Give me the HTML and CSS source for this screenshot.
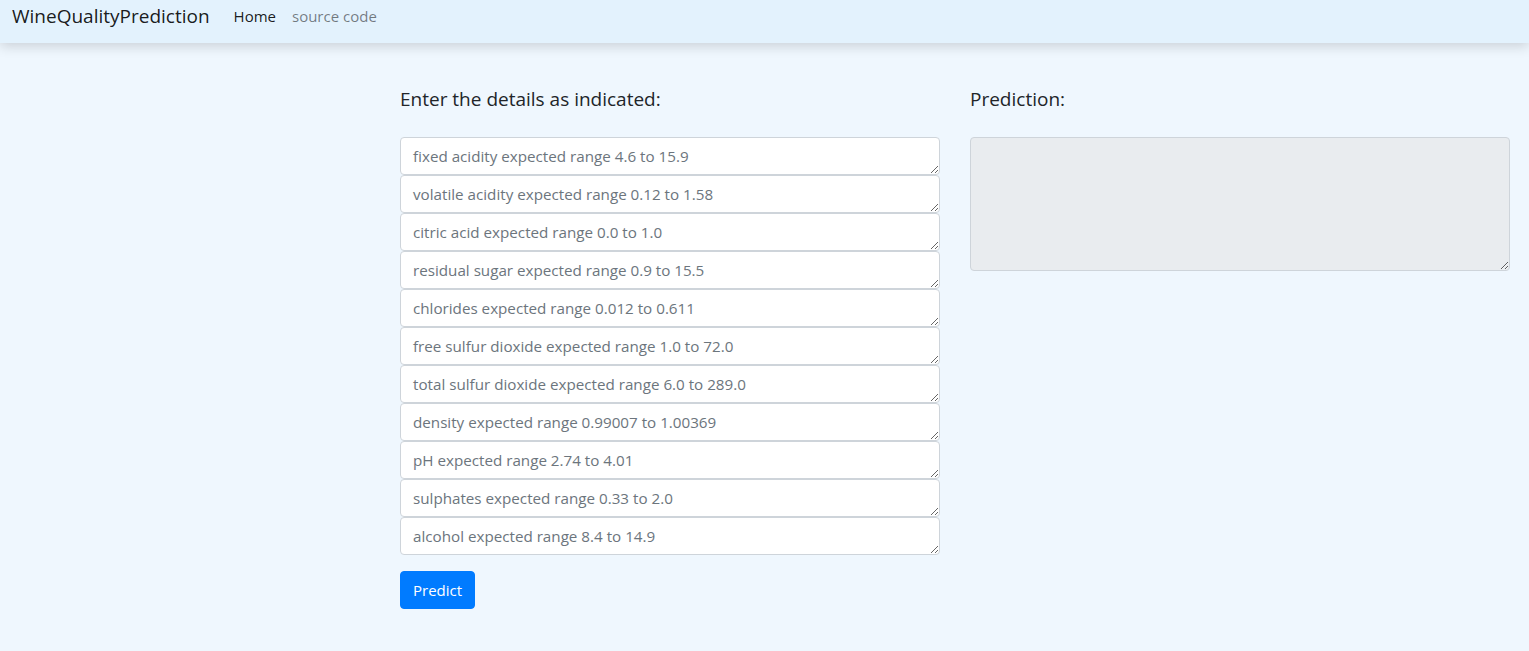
FILE: index.html
```html
<!DOCTYPE html>
<html lang="en">
<head>
<meta charset="utf-8">
<title>WineQualityPrediction</title>
<link rel="stylesheet" href="styles.css">
</head>
<body>
<nav class="navbar">
  <a class="brand" href="#">WineQualityPrediction</a>
  <ul class="nav">
    <li><a class="nav-link active" href="#">Home</a></li>
    <li><a class="nav-link" href="#">source code</a></li>
  </ul>
</nav>
<main class="main">
  <section class="col">
    <h5 class="title">Enter the details as indicated:</h5>
    <form class="form">
      <textarea class="field" rows="1" placeholder="fixed acidity expected range 4.6 to 15.9"></textarea>
      <textarea class="field" rows="1" placeholder="volatile acidity expected range 0.12 to 1.58"></textarea>
      <textarea class="field" rows="1" placeholder="citric acid expected range 0.0 to 1.0"></textarea>
      <textarea class="field" rows="1" placeholder="residual sugar expected range 0.9 to 15.5"></textarea>
      <textarea class="field" rows="1" placeholder="chlorides expected range 0.012 to 0.611"></textarea>
      <textarea class="field" rows="1" placeholder="free sulfur dioxide expected range 1.0 to 72.0"></textarea>
      <textarea class="field" rows="1" placeholder="total sulfur dioxide expected range 6.0 to 289.0"></textarea>
      <textarea class="field" rows="1" placeholder="density expected range 0.99007 to 1.00369"></textarea>
      <textarea class="field" rows="1" placeholder="pH expected range 2.74 to 4.01"></textarea>
      <textarea class="field" rows="1" placeholder="sulphates expected range 0.33 to 2.0"></textarea>
      <textarea class="field" rows="1" placeholder="alcohol expected range 8.4 to 14.9"></textarea>
      <button type="button" class="btn">Predict</button>
    </form>
  </section>
  <section class="col">
    <h5 class="title">Prediction:</h5>
    <textarea class="field result" readonly></textarea>
  </section>
</main>
</body>
</html>
```

FILE: styles.css
```css
* { box-sizing: border-box; }
html, body { margin: 0; height: 100%; }
body {
  background: #eff7fe;
  font-family: "Open Sans", "Noto Sans", sans-serif;
  font-size: 16px;
  line-height: 1.5;
  color: #212529;
}
.navbar {
  height: 43px;
  background: #e3f2fd;
  display: flex;
  align-items: flex-start;
  padding: 1px 12px 0;
  box-shadow: 0 3px 12px rgba(0, 0, 0, 0.16);
  position: relative;
}
.brand {
  font-size: 19px;
  line-height: 30px;
  color: rgba(0, 0, 0, 0.9);
  text-decoration: none;
  margin-right: 16px;
}
.nav {
  display: flex;
  list-style: none;
  margin: 0;
  padding: 0;
}
.nav-link {
  display: block;
  padding: 0 8px;
  line-height: 30px;
  font-size: 15px;
  color: rgba(0, 0, 0, 0.5);
  text-decoration: none;
}
.nav-link.active { color: rgba(0, 0, 0, 0.9); }
.main {
  display: flex;
  gap: 30px;
  padding: 44px 0 0 400px;
}
.col { width: 540px; }
.title {
  margin: 0 0 26px;
  font-size: 19px;
  font-weight: 400;
  line-height: 24px;
  color: #212529;
}
.form { display: flex; flex-direction: column; align-items: flex-start; }
.field {
  display: block;
  width: 540px;
  height: 38px;
  margin: 0;
  padding: 6px 12px;
  font-family: inherit;
  font-size: 15.2px;
  line-height: 24px;
  color: #495057;
  background: #fff;
  border: 1px solid #ced4da;
  border-radius: 4px;
  resize: vertical;
}
.field::placeholder { color: #6c757d; opacity: 1; }
.result { height: 134px; background: #e9ecef; }
.btn {
  margin-top: 16px;
  height: 38px;
  padding: 0 12px;
  font-family: inherit;
  font-size: 15px;
  color: #fff;
  background: #007bff;
  border: 1px solid #007bff;
  border-radius: 4px;
}
```
